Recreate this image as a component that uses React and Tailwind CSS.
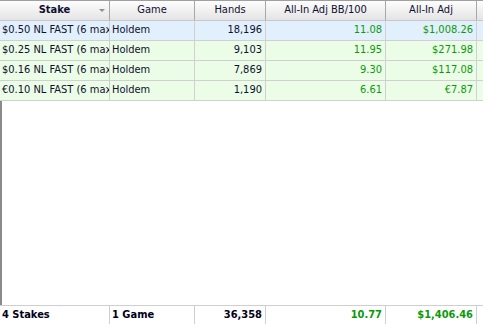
import React from 'react';

const cols = [
    { key: 'stake', label: 'Stake', w: 'w-[110px]', align: 'text-left' },
    { key: 'game', label: 'Game', w: 'w-[85px]', align: 'text-left' },
    { key: 'hands', label: 'Hands', w: 'w-[71px]', align: 'text-right' },
    { key: 'bb', label: 'All-In Adj BB/100', w: 'w-[120px]', align: 'text-right' },
    { key: 'adj', label: 'All-In Adj', w: 'w-[91px]', align: 'text-right' },
];

const rows = [
    { stake: '$0.50 NL FAST (6 max)', game: 'Holdem', hands: '18,196', bb: '11.08', adj: '$1,008.26', selected: true },
    { stake: '$0.25 NL FAST (6 max)', game: 'Holdem', hands: '9,103', bb: '11.95', adj: '$271.98' },
    { stake: '$0.16 NL FAST (6 max)', game: 'Holdem', hands: '7,869', bb: '9.30', adj: '$117.08' },
    { stake: '€0.10 NL FAST (6 max)', game: 'Holdem', hands: '1,190', bb: '6.61', adj: '€7.87' },
];

const totals = { stake: '4 Stakes', game: '1 Game', hands: '36,358', bb: '10.77', adj: '$1,406.46' };

const green = (k) => k === 'bb' || k === 'adj';

export default function App() {
    return (
        <div
            className="w-[483px] h-[324px] bg-white flex flex-col overflow-hidden text-[11px] text-[#101030]"
            style={{ fontFamily: '"DejaVu Sans Condensed", "DejaVu Sans", sans-serif' }}
        >
            {/* header */}
            <div className="flex h-[21px] shrink-0 border-t border-[#a0a0a0] border-b border-b-[#c8c8c8] bg-gradient-to-b from-[#fdfdfd] to-[#e4e4e4]">
                {cols.map((c) => (
                    <div key={c.key} className={`${c.w} shrink-0 relative flex items-center justify-center border-r border-[#a8a8a8] ${c.key === 'stake' ? 'font-bold' : ''}`}>
                        <span>{c.label}</span>
                        {c.key === 'stake' && (
                            <span className="absolute right-[4px] top-[8px] w-0 h-0 border-l-[3px] border-r-[3px] border-t-[3px] border-l-transparent border-r-transparent border-t-[#909090]" />
                        )}
                    </div>
                ))}
                <div className="flex-1" />
            </div>

            {/* rows */}
            <div className="flex-1 flex flex-col border-l-2 border-[#8a8a8a]">
                {rows.map((r, i) => (
                    <div key={i} className={`flex h-[20px] shrink-0 border-b border-[#d0d0d0] ${r.selected ? 'bg-[#e1f0fc]' : 'bg-[#ebfde6]'} -ml-[2px]`}>
                        {cols.map((c) => (
                            <div
                                key={c.key}
                                className={`${c.w} shrink-0 flex items-center overflow-hidden whitespace-nowrap border-r border-[#d0d0d0] ${c.align === 'text-right' ? 'justify-end pr-[3px]' : 'pl-[2px]'} ${green(c.key) ? 'text-[#0c9a0c]' : ''}`}
                            >
                                {r[c.key]}
                            </div>
                        ))}
                        <div className="flex-1" />
                    </div>
                ))}
            </div>

            {/* totals */}
            <div className="flex h-[19px] shrink-0 border-t border-[#cfcfcf] font-bold text-[#000018]">
                {cols.map((c) => (
                    <div
                        key={c.key}
                        className={`${c.w} shrink-0 flex items-center overflow-hidden whitespace-nowrap border-r border-[#cfcfcf] ${c.align === 'text-right' ? 'justify-end pr-[3px]' : 'pl-[2px]'} ${green(c.key) ? 'text-[#0c9a0c]' : ''}`}
                    >
                        {totals[c.key]}
                    </div>
                ))}
                <div className="flex-1" />
            </div>
        </div>
    );
}
